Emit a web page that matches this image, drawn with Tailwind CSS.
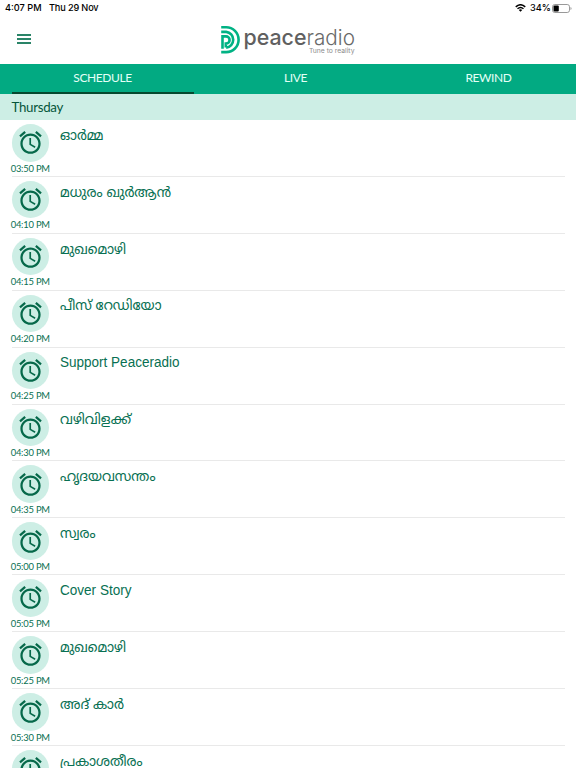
<!DOCTYPE html>
<html lang="ml">
<head>
<meta charset="utf-8">
<title>Peace Radio</title>
<script src="https://cdn.jsdelivr.net/npm/@tailwindcss/browser@4"></script>
</head>
<body class="bg-white w-[576px] h-[768px] overflow-hidden flex flex-col font-['Lato',sans-serif]">
<div class="h-4 shrink-0 flex items-center justify-between pl-[5px] pr-1 text-[9.2px] leading-4 font-medium text-black font-['Inter',sans-serif]">
  <div class="flex gap-[8px]"><span class="w-[36px] whitespace-nowrap">4:07 PM</span><span class="tracking-[-0.15px]">Thu 29 Nov</span></div>
  <div class="flex items-center">
    <svg class="w-[11px] h-2 mr-[4px]" viewBox="0 0 22 16" fill="none" stroke="#000" stroke-width="3"><path d="M1.500 5.800Q11-2.800 20.500 5.800M5 9.500Q11 4.200 17 9.500"/><path d="M11 15.500L7.600 12Q11 9.200 14.400 12Z" fill="#000" stroke="none"/></svg>
    <span class="mr-[2px] w-[20px]">34%</span>
    <svg class="w-[20px] h-[9px]" viewBox="0 0 20 9"><rect x=".5" y=".5" width="17" height="8" rx="2.300" fill="none" stroke="#999"/><rect x="1.500" y="1.500" width="5.300" height="6" rx="1"/><path d="M18.500 3v3q1-.3 1-1.500t-1-1.500" fill="#999"/></svg>
  </div>
</div>
<header class="h-[47.500px] shrink-0 flex">
  <svg class="w-[14px] h-[10px] mt-[18px] ml-[17px]" viewBox="0 0 14 10" fill="#2a8468"><path d="M0 0h14v2H0zM0 4h14v2H0zM0 8h14v2H0z"/></svg>
  <div class="flex ml-[189px] mt-[9px]">
    <svg class="w-[21px] h-[30px]" viewBox="0 0 21 30" fill="none" stroke="#00b284" stroke-width="2.600"><path d="M1.200 2.300h5a12.200 12.200 0 0 1 0 24.800H1.200M1.200 6.900h5a7.900 7.900 0 0 1 0 15.700M2.500 23.700V11.400h3.500a3.600 3.600 0 0 1 0 7.200H5.800v4"/></svg>
    <svg class="block ml-[3px] w-[112px] h-[30px] overflow-visible font-['Inter',sans-serif]" viewBox="0 0 112 30"><text x="-.5" y="19.500" font-size="22" font-weight="500" fill="#606060" textLength="63" lengthAdjust="spacingAndGlyphs">peace</text><text x="62.500" y="19.500" font-size="21.500" font-weight="300" fill="#6a6a6a" textLength="48.500" lengthAdjust="spacingAndGlyphs">radio</text><text x="65" y="27.500" font-size="6.800" fill="#8c8c8c" textLength="45.500" lengthAdjust="spacingAndGlyphs">Tune to reality</text></svg>
  </div>
</header>
<nav class="h-[30.500px] shrink-0 bg-[#02aa82] px-[11.500px] grid grid-cols-[182px_1fr_182px] text-center text-[12px] tracking-[-0.4px] leading-[28px] text-[#e4fff7]">
  <div class="border-b-2 border-[#05492f]">SCHEDULE</div><div class="pl-[15px]">LIVE</div><div class="pl-[30px]">REWIND</div>
</nav>
<div class="h-[25.500px] shrink-0 bg-[#cdeee5] pl-[11.500px] text-[13.300px] tracking-[-0.3px] leading-[26px] text-[#06563b]">Thursday</div>
<main id="rows" class="shrink-0 pt-[.6px]"></main>
<template id="row">
  <div class="h-[56.900px] ml-[11.500px] mr-[11.500px] border-b border-[#e9e9e9] flex">
    <div class="w-[37.500px] shrink-0 flex flex-col items-center pt-[4px]">
      <div class="size-[37.500px] shrink-0 rounded-full bg-[#cdeee5] flex items-center justify-center">
        <svg class="size-[27px]" viewBox="0 0 24 24" fill="#06694a"><path d="M22 5.720l-4.600-3.860-1.290 1.530 4.600 3.860L22 5.720zM7.880 3.390L6.600 1.860 2 5.710l1.290 1.530 4.590-3.850zM12.500 8H11v6l4.750 2.850.75-1.230-4-2.370V8zM12 4c-4.970 0-9 4.030-9 9s4.020 9 9 9c4.970 0 9-4.030 9-9s-4.030-9-9-9zm0 16c-3.870 0-7-3.130-7-7s3.130-7 7-7 7 3.130 7 7-3.130 7-7 7z"/></svg>
      </div>
      <time class="text-[9.400px] tracking-[-0.2px] leading-[13px] whitespace-nowrap text-[#087052]"></time>
    </div>
    <svg class="title ml-[11.300px] mt-[5.700px] w-[200px] h-6 overflow-visible font-['Liberation_Sans','Noto_Sans_Malayalam',sans-serif]"><text x="0" y="14" font-size="13.800" fill="#087052" lengthAdjust="spacingAndGlyphs"></text></svg>
  </div>
</template>
<script>
const items = [
  ["03:50 PM","ഓർമ്മ",43.5],["04:10 PM","മധുരം ഖുർആൻ",111],["04:15 PM","മുഖമൊഴി",66],
  ["04:20 PM","പീസ് റേഡിയോ",101.5],["04:25 PM","Support Peaceradio",119.5],["04:30 PM","വഴിവിളക്ക്",71],
  ["04:35 PM","ഹൃദയവസന്തം",95.5],["05:00 PM","സ്വരം",35.5],["05:05 PM","Cover Story",71.5],
  ["05:25 PM","മുഖമൊഴി",66],["05:30 PM","അദ് കാർ",64],["05:35 PM","പ്രകാശതീരം",82.5]
];
const tpl = document.getElementById("row"), rows = document.getElementById("rows");
for (const [time, title, width] of items) {
  const n = tpl.content.cloneNode(true);
  n.querySelector("time").textContent = time;
  const t = n.querySelector("text");
  t.textContent = title;
  t.setAttribute("textLength", width);
  rows.append(n);
}
</script>
</body>
</html>
